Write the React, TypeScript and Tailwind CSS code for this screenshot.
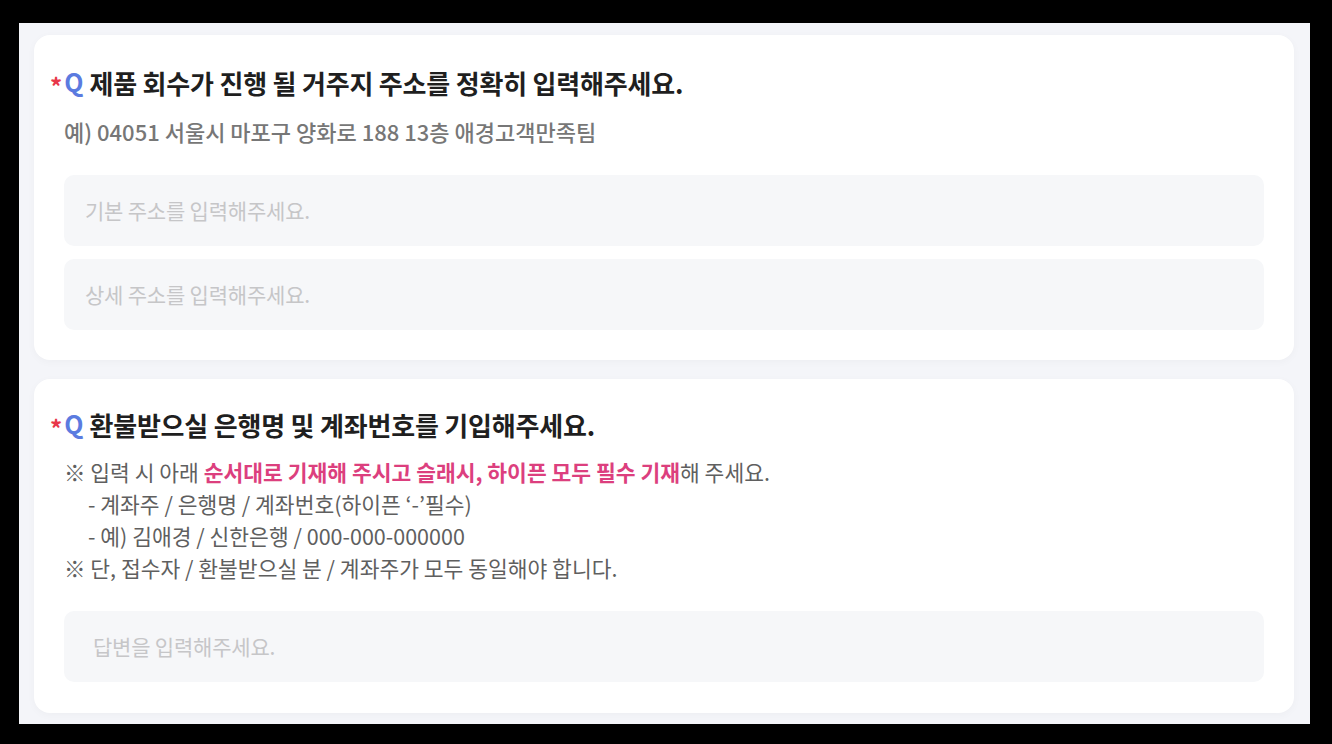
import React from "react";

const font = { fontFamily: '"Noto Sans CJK KR", "Noto Sans", sans-serif' };

function Title({ children }: { children: React.ReactNode }) {
  return (
    <div className="flex items-center h-[34px]">
      <span className="text-[#e8374a] text-[24px] leading-none font-bold mr-[2px] mt-[8px]">*</span>
      <span className="text-[#5b7be0] text-[25px] font-bold mr-[6px]">Q</span>
      <span className="text-[#1f1f1f] text-[26px] font-bold tracking-[-0.2px]">{children}</span>
    </div>
  );
}

function Field({ placeholder, pl }: { placeholder: string; pl: string }) {
  return (
    <div className={`h-[71px] rounded-[10px] bg-[#f6f7f9] flex items-center ${pl}`}>
      <span className="text-[#c6c6c8] text-[21px] tracking-[-0.2px]">{placeholder}</span>
    </div>
  );
}

export default function App() {
  return (
    <div className="w-[1332px] h-[744px] bg-black pt-[23px] pl-[19px]" style={font}>
      <div className="w-[1291px] h-[701px] bg-[#f4f5f9] pt-[12px] pl-[15px] pr-[16px] flex flex-col gap-[19px]">
        <div className="bg-white rounded-[16px] shadow-[0_2px_8px_rgba(0,0,0,0.03)] pl-[16px] pr-[30px] pt-[30px] pb-[30px]">
          <Title>제품 회수가 진행 될 거주지 주소를 정확히 입력해주세요.</Title>
          <div className="pl-[14px] mt-[17px] text-[#777777] text-[22px] font-medium leading-[30px]">
            예) 04051 서울시 마포구 양화로 188 13층 애경고객만족팀
          </div>
          <div className="pl-[14px] mt-[29px] flex flex-col gap-[13px]">
            <Field placeholder="기본 주소를 입력해주세요." pl="pl-[21px]" />
            <Field placeholder="상세 주소를 입력해주세요." pl="pl-[21px]" />
          </div>
        </div>
        <div className="bg-white rounded-[16px] shadow-[0_2px_8px_rgba(0,0,0,0.03)] pl-[16px] pr-[30px] pt-[28px] pb-[31px]">
          <Title>환불받으실 은행명 및 계좌번호를 기입해주세요.</Title>
          <div className="pl-[14px] mt-[15px] text-[#5f5f5f] text-[21.5px] leading-[32px]">
            <div>
              ※ 입력 시 아래{" "}
              <span className="text-[#dc3f7e] font-bold">순서대로 기재해 주시고 슬래시, 하이픈 모두 필수 기재</span>해 주세요.
            </div>
            <div className="pl-[24px]">- 계좌주 / 은행명 / 계좌번호(하이픈 ‘-’필수)</div>
            <div className="pl-[24px]">- 예) 김애경 / 신한은행 / 000-000-000000</div>
            <div>※ 단, 접수자 / 환불받으실 분 / 계좌주가 모두 동일해야 합니다.</div>
          </div>
          <div className="pl-[14px] mt-[27px]">
            <Field placeholder="답변을 입력해주세요." pl="pl-[29px]" />
          </div>
        </div>
      </div>
    </div>
  );
}
